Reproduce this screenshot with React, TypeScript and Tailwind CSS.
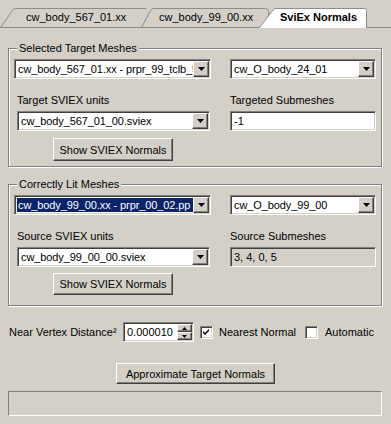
import type { ReactNode } from 'react'

const font = { fontFamily: '"Liberation Sans", Arial, sans-serif' }

const sunken =
  'border border-t-[#808080] border-l-[#808080] border-b-white border-r-white shadow-[inset_1px_1px_0_#404040,inset_-1px_-1px_0_#d4d0c8]'
const raised =
  'border border-t-white border-l-white border-b-[#404040] border-r-[#404040] shadow-[inset_-1px_-1px_0_#808080]'

function Arrow({ up = false, w = 7 }: { up?: boolean; w?: number }) {
  const h = Math.ceil(w / 2)
  return (
    <svg width={w} height={h} viewBox={`0 0 ${w} ${h}`}>
      <polygon points={up ? `0,${h} ${w},${h} ${w / 2},0` : `0,0 ${w},0 ${w / 2},${h}`} fill="#000" />
    </svg>
  )
}

function Combo({ value, width, selected = false }: { value: string; width: string; selected?: boolean }) {
  return (
    <div className={`${sunken} ${width} h-[20px] bg-white flex items-stretch p-[1px]`}>
      <div className="flex-1 min-w-0 overflow-hidden flex items-center pl-[1px]">
        <span
          className={`whitespace-nowrap leading-[14px] tracking-[-0.1px] pl-[1px] ${
            selected ? 'bg-[#0a246a] text-white w-full' : 'text-black'
          }`}
        >
          {value}
        </span>
      </div>
      <div className={`${raised} w-[16px] bg-[#d4d0c8] flex items-center justify-center`}>
        <Arrow />
      </div>
    </div>
  )
}

function TextBox({ value, width, readOnly = false }: { value: string; width: string; readOnly?: boolean }) {
  return (
    <div
      className={`${sunken} ${width} h-[20px] flex items-center pl-[3px] ${
        readOnly ? 'bg-[#d4d0c8]' : 'bg-white'
      }`}
    >
      <span className="leading-[14px]">{value}</span>
    </div>
  )
}

function Button({ children, className }: { children: ReactNode; className: string }) {
  return (
    <div className={`${raised} ${className} bg-[#d4d0c8] flex items-center justify-center`}>
      <span className="leading-[14px]">{children}</span>
    </div>
  )
}

function Group({ title, children }: { title: string; children: ReactNode }) {
  return (
    <div className="relative border border-[#808080] shadow-[inset_1px_1px_0_#fff,1px_1px_0_#fff]">
      <span className="absolute left-[8px] -top-[8px] bg-[#d4d0c8] px-[2px] leading-[14px]">{title}</span>
      {children}
    </div>
  )
}

function CheckBox({ checked }: { checked: boolean }) {
  return (
    <div className={`${sunken} w-[13px] h-[13px] bg-white flex items-center justify-center`}>
      {checked && (
        <svg width="7" height="7" viewBox="0 0 7 7">
          <path d="M0 2 L2 4 L6 0 L6 2 L2 6 L0 4 Z" fill="#000" />
        </svg>
      )}
    </div>
  )
}

function Tabs() {
  return (
    <div className="relative h-[28px]">
      <svg className="absolute inset-0" width="391" height="28" viewBox="0 0 391 28">
        <path d="M0.5 27.5 L12.5 10.5 Q13.5 8.5 15.5 8.5 L146.5 8.5" fill="none" stroke="#8c8c8c" />
        <path d="M141.5 27.5 L150.5 10.5 Q151.5 8.5 153.5 8.5 L265.5 8.5 Q268.5 8.5 268.5 11.5 L268.5 18" fill="none" stroke="#8c8c8c" />
        <path d="M259.5 28 L259.5 27.5 L273.5 9.5 Q274.5 8.5 276.5 8.5 L364.5 8.5 Q366.5 8.5 366.5 10.5 L366.5 28 Z" fill="#fff" stroke="#8c8c8c" />
        <rect x="260" y="27" width="106" height="2" fill="#fff" />
        <line x1="0" y1="27.5" x2="259" y2="27.5" stroke="#8c8c8c" />
        <line x1="367" y1="27.5" x2="391" y2="27.5" stroke="#8c8c8c" />
      </svg>
      <div className="relative flex pt-[11px] leading-[13px]">
        <span className="w-[159px] pl-[26px]">cw_body_567_01.xx</span>
        <span className="w-[121px]">cw_body_99_00.xx</span>
        <span className="font-bold">SviEx Normals</span>
      </div>
    </div>
  )
}

export default function App() {
  return (
    <div className="w-[391px] h-[424px] bg-[#d4d0c8] text-black text-[11px] overflow-hidden" style={font}>
      <Tabs />
      <div className="pl-[8px] pr-[9px] pt-[20px]">
        <Group title="Selected Target Meshes">
          <div className="h-[117px] pt-[10px]">
            <div className="flex">
              <div className="ml-[5px]">
                <Combo value="cw_body_567_01.xx - prpr_99_tclb_5" width="w-[197px]" />
              </div>
              <div className="ml-[19px]">
                <Combo value="cw_O_body_24_01" width="w-[146px]" />
              </div>
            </div>
            <div className="flex mt-[15px] leading-[13px]">
              <span className="ml-[8px] w-[213px]">Target SVIEX units</span>
              <span>Targeted Submeshes</span>
            </div>
            <div className="flex mt-[4px]">
              <div className="ml-[8px]">
                <Combo value="cw_body_567_01_00.sviex" width="w-[193px]" />
              </div>
              <div className="ml-[20px]">
                <TextBox value="-1" width="w-[146px]" />
              </div>
            </div>
            <div className="flex mt-[7px]">
              <Button className="ml-[44px] w-[120px] h-[23px]">Show SVIEX Normals</Button>
            </div>
          </div>
        </Group>
        <div className="h-[17px]" />
        <Group title="Correctly Lit Meshes">
          <div className="h-[120px] pt-[10px]">
            <div className="flex">
              <div className="ml-[5px]">
                <Combo value="cw_body_99_00.xx - prpr_00_02.pp" width="w-[197px]" selected />
              </div>
              <div className="ml-[19px]">
                <Combo value="cw_O_body_99_00" width="w-[146px]" />
              </div>
            </div>
            <div className="flex mt-[15px] leading-[13px]">
              <span className="ml-[8px] w-[213px]">Source SVIEX units</span>
              <span>Source Submeshes</span>
            </div>
            <div className="flex mt-[4px]">
              <div className="ml-[8px]">
                <Combo value="cw_body_99_00_00.sviex" width="w-[193px]" />
              </div>
              <div className="ml-[20px]">
                <TextBox value="3, 4, 0, 5" width="w-[146px]" readOnly />
              </div>
            </div>
            <div className="flex mt-[6px]">
              <Button className="ml-[44px] w-[120px] h-[22px]">Show SVIEX Normals</Button>
            </div>
          </div>
        </Group>
        <div className="flex items-center mt-[16px] h-[20px]">
          <span className="ml-[1px] w-[114px]">Near Vertex Distance²</span>
          <div className={`${sunken} w-[71px] h-[20px] bg-white flex items-stretch p-[1px]`}>
            <div className="flex-1 flex items-center pl-[2px]">
              <span className="leading-[14px]">0.000010</span>
            </div>
            <div className="w-[15px] flex flex-col">
              <div className={`${raised} flex-1 bg-[#d4d0c8] flex items-center justify-center`}>
                <Arrow up w={5} />
              </div>
              <div className={`${raised} flex-1 bg-[#d4d0c8] flex items-center justify-center`}>
                <Arrow w={5} />
              </div>
            </div>
          </div>
          <div className="ml-[6px]">
            <CheckBox checked />
          </div>
          <span className="ml-[6px] w-[86px]">Nearest Normal</span>
          <CheckBox checked={false} />
          <span className="ml-[7px]">Automatic</span>
        </div>
        <div className="flex mt-[21px]">
          <Button className="ml-[108px] w-[159px] h-[21px]">Approximate Target Normals</Button>
        </div>
        <div className="mt-[7px] h-[25px] border border-t-[#808080] border-l-[#808080] border-b-white border-r-white" />
      </div>
    </div>
  )
}
